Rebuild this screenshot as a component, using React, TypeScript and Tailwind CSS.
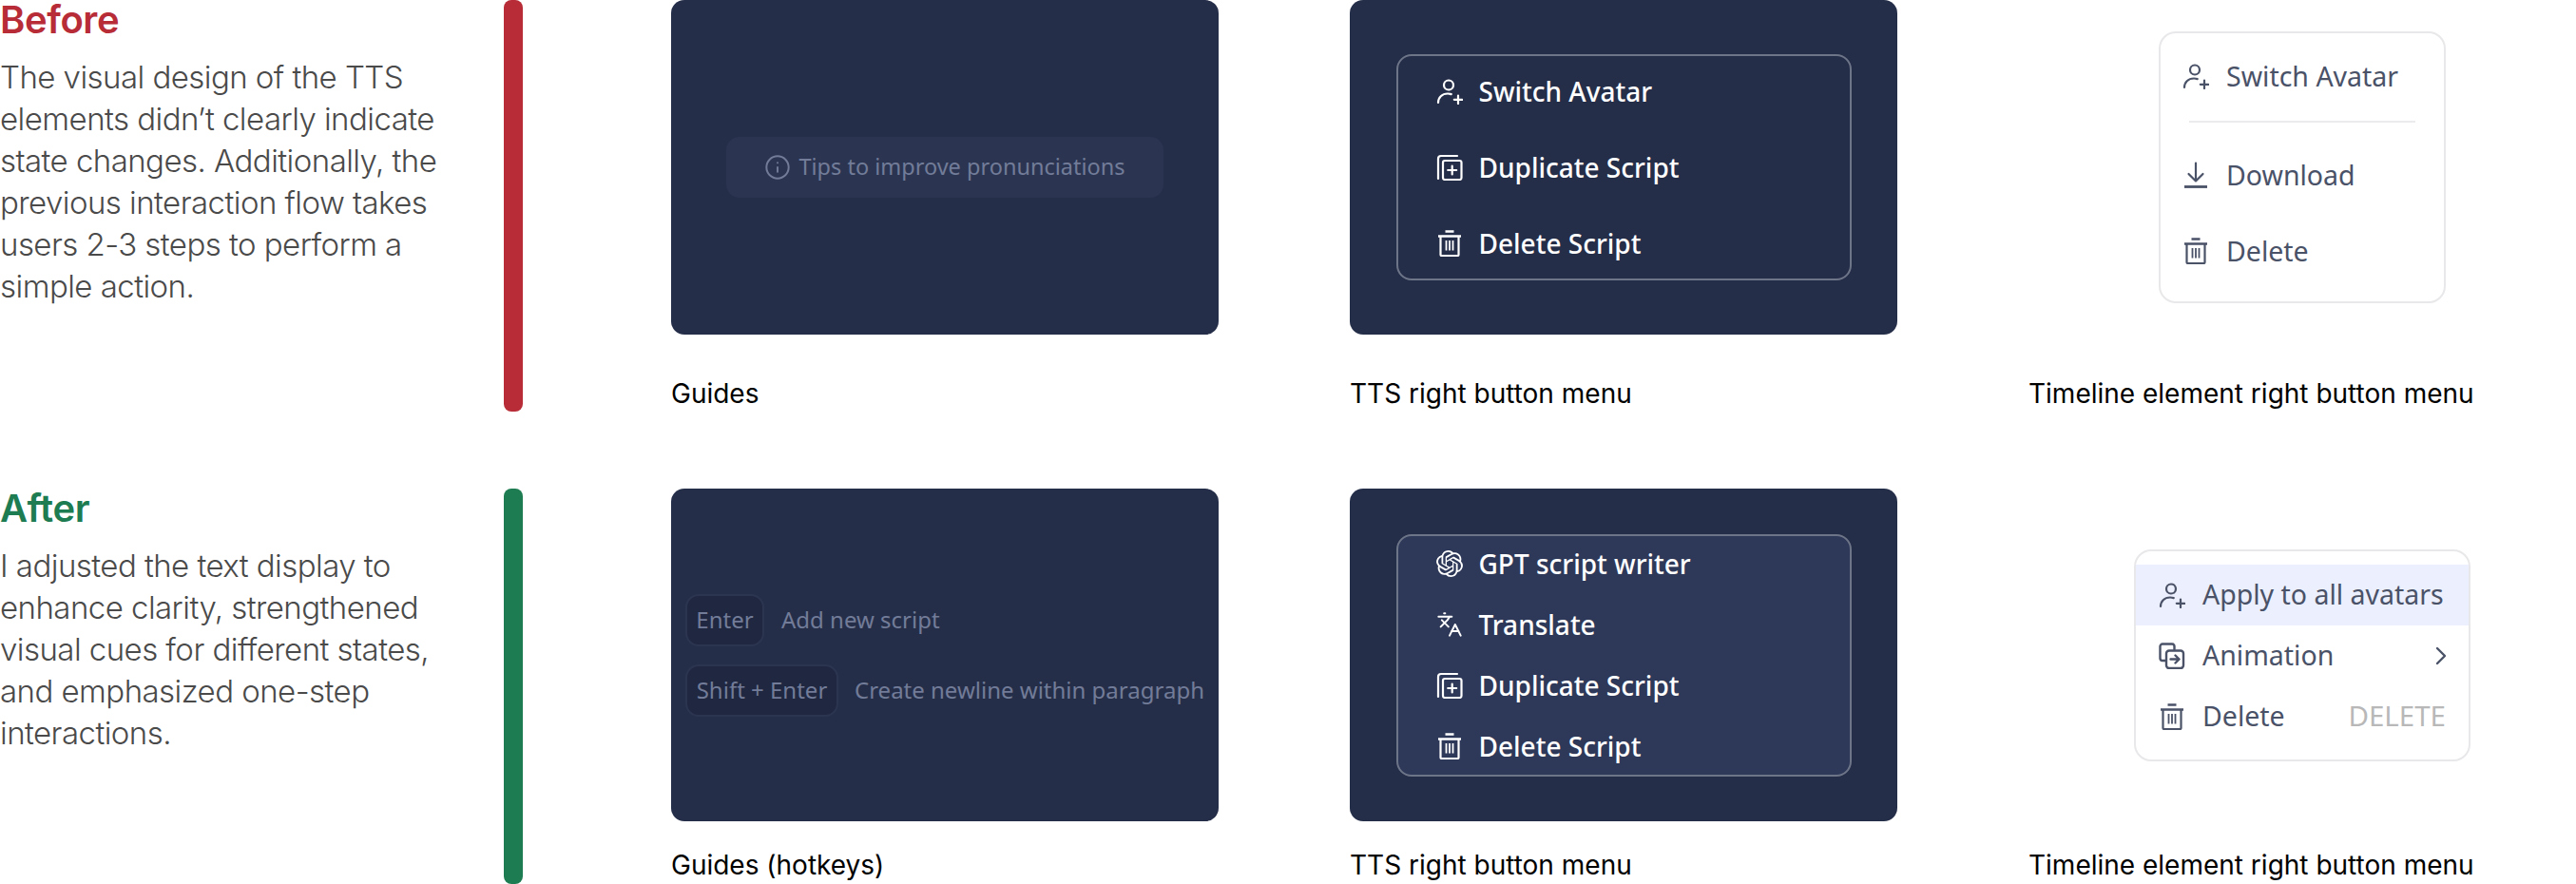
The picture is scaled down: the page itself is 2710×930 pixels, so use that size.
import { ChevronRight, Info, Languages } from "lucide-react";
import { SiOpenai } from "react-icons/si";
import type { ReactNode } from "react";

const bodyFont = "font-['Inter','Liberation_Sans',sans-serif]";
const menuFont = "font-['Noto_Sans','Lato',sans-serif]";

function UserPlusIcon() {
  return (
    <svg viewBox="0 0 28 28" fill="none" stroke="currentColor" strokeWidth="2.200" strokeLinecap="round" className="h-7 w-7">
      <circle cx="13" cy="7.500" r="5" />
      <path d="M2 26c0-5.500 4-9.500 10-9.500 1.400 0 2.600.2 3.700.6" />
      <path d="M23 18.500v8.500M18.800 22.800h8.400" />
    </svg>
  );
}

function DuplicateIcon() {
  return (
    <svg viewBox="0 0 28 28" fill="none" stroke="currentColor" strokeWidth="2.200" strokeLinejoin="round" strokeLinecap="round" className="h-7 w-7">
      <path d="M2 26V5a3 3 0 0 1 3-3h17" />
      <rect x="7" y="7" width="19.500" height="20" rx="2" />
      <path d="M16.700 12.500v9M12.200 17h9" />
    </svg>
  );
}

function TrashIcon() {
  return (
    <svg viewBox="0 0 28 28" fill="none" stroke="currentColor" strokeWidth="2.200" strokeLinejoin="round" className="h-7 w-7">
      <path d="M9.500 1.500h9M2 6.500h24" strokeWidth="2.400" />
      <path d="M4.500 7v19a1 1 0 0 0 1 1h17a1 1 0 0 0 1-1V7" />
      <path d="M10.500 11v10.500M14 11v10.500M17.500 11v10.500" strokeWidth="1.800" />
    </svg>
  );
}

function DownloadIcon() {
  return (
    <svg viewBox="0 0 28 28" fill="none" stroke="currentColor" strokeWidth="2.200" strokeLinecap="round" strokeLinejoin="round" className="h-7 w-7">
      <path d="M14 1.500v19M6.500 13l7.500 7.500 7.500-7.500" />
      <path d="M2 26.500h24" strokeWidth="2.800" strokeLinecap="butt" />
    </svg>
  );
}

function AnimationIcon() {
  return (
    <svg viewBox="0 0 28 28" fill="none" stroke="currentColor" strokeWidth="2.400" strokeLinecap="round" strokeLinejoin="round" className="h-7 w-7">
      <path d="M7 19H4a2.500 2.500 0 0 1-2.500-2.500V4A2.500 2.500 0 0 1 4 1.500h10A2.500 2.500 0 0 1 16.500 4v3" />
      <rect x="8" y="8.500" width="18" height="18.500" rx="3" />
      <path d="M12.500 17.500h8.500M17.500 13.500l4 4-4 4" />
    </svg>
  );
}

function Caption({ children, className }: { children: ReactNode; className: string }) {
  return (
    <div className={`${bodyFont} text-[28px] leading-[32px] font-normal text-black ${className}`}>
      {children}
    </div>
  );
}

function Summary({ title, color, lines }: { title: string; color: string; lines: string[] }) {
  return (
    <div className={`w-[530px] shrink-0 ${bodyFont}`}>
      <div className={`text-[40px] leading-[42px] font-semibold tracking-[-0.4px] ${color}`}>{title}</div>
      <div className="mt-[17px] text-[33px] leading-[44px] font-light tracking-[-0.55px] whitespace-nowrap text-[#4a4a4a]">
        {lines.map((line) => (
          <div key={line}>{line}</div>
        ))}
      </div>
    </div>
  );
}

function DarkRow({ icon, label }: { icon: ReactNode; label: string }) {
  return (
    <div className="flex h-10 items-center gap-[17px] text-white">
      {icon}
      <span className={`${menuFont} text-[28px] font-medium`}>{label}</span>
    </div>
  );
}

function LightRow({ icon, label, right, active }: { icon: ReactNode; label: string; right?: ReactNode; active?: boolean }) {
  return (
    <div className={`flex h-16 items-center gap-[18px] pr-6 pl-6 ${active ? "bg-[#eceffd]" : ""}`}>
      {icon}
      <span className="text-[28.500px] whitespace-nowrap">{label}</span>
      {right && <span className="ml-auto flex items-center">{right}</span>}
    </div>
  );
}

export default function App() {
  return (
    <div className="h-[930px] w-[2710px] overflow-hidden bg-white">
      {/* before */}
      <div className="flex h-[433px]">
        <Summary
          title="Before"
          color="text-[#b72c36]"
          lines={[
            "The visual design of the TTS",
            "elements didn’t clearly indicate",
            "state changes. Additionally, the",
            "previous interaction flow takes",
            "users 2-3 steps to perform a",
            "simple action.",
          ]}
        />
        <div className="h-full w-5 shrink-0 rounded-lg bg-[#b72c36]" />
        <div className="ml-[156px] w-[576px] shrink-0">
          <div className="flex h-[352px] items-center justify-center rounded-[14px] bg-[#252e49]">
            <div className={`flex h-16 w-[460px] items-center justify-center gap-[8px] rounded-[14px] bg-[#2b3552] text-[#727c98] ${menuFont}`}>
              <Info className="h-7 w-7" strokeWidth={1.700} />
              <span className="text-[23.500px]">Tips to improve pronunciations</span>
            </div>
          </div>
          <Caption className="mt-[46px]">Guides</Caption>
        </div>
        <div className="ml-[138px] w-[576px] shrink-0">
          <div className="flex h-[352px] items-center justify-center rounded-[14px] bg-[#252e49]">
            <div className="flex h-[238px] w-[479px] flex-col justify-center gap-10 rounded-2xl border-2 border-[#6d7588] pl-10">
              <DarkRow icon={<UserPlusIcon />} label="Switch Avatar" />
              <DarkRow icon={<DuplicateIcon />} label="Duplicate Script" />
              <DarkRow icon={<TrashIcon />} label="Delete Script" />
            </div>
          </div>
          <Caption className="mt-[46px]">TTS right button menu</Caption>
        </div>
        <div className="ml-[138px] w-[576px] shrink-0">
          <div className="flex h-[352px] items-center justify-center">
            <div className={`h-[286px] w-[302px] rounded-[18px] border-2 border-[#e8e8ea] pt-[25px] pl-[23px] text-[#4a5268] ${menuFont}`}>
              <div className="flex h-10 items-center gap-[18px]">
                <UserPlusIcon />
                <span className="text-[28.500px]">Switch Avatar</span>
              </div>
              <div className="mt-[27px] ml-[7px] h-[2px] w-[238px] bg-[#ebebed]" />
              <div className="mt-[35px] flex h-10 items-center gap-[18px]">
                <DownloadIcon />
                <span className="text-[28.500px]">Download</span>
              </div>
              <div className="mt-10 flex h-10 items-center gap-[18px]">
                <TrashIcon />
                <span className="text-[28.500px]">Delete</span>
              </div>
            </div>
          </div>
          <Caption className="mt-[46px]">Timeline element right button menu</Caption>
        </div>
      </div>

      {/* after */}
      <div className="mt-[81px] flex h-[416px]">
        <Summary
          title="After"
          color="text-[#1e7c52]"
          lines={[
            "I adjusted the text display to",
            "enhance clarity, strengthened",
            "visual cues for different states,",
            "and emphasized one-step",
            "interactions.",
          ]}
        />
        <div className="h-full w-5 shrink-0 rounded-lg bg-[#1e7c52]" />
        <div className="ml-[156px] w-[576px] shrink-0">
          <div className={`flex h-[350px] flex-col justify-center gap-[19px] rounded-[14px] bg-[#252e49] pl-[15px] text-[24px] text-[#727c98] ${menuFont}`}>
            <div className="flex items-center gap-[18px]">
              <span className="flex h-[55px] w-[83px] items-center justify-center rounded-[14px] border-2 border-[#2c3550] bg-[#1f2741]">Enter</span>
              <span>Add new script</span>
            </div>
            <div className="flex items-center gap-[17px]">
              <span className="flex h-[55px] w-[161px] items-center justify-center rounded-[14px] border-2 border-[#2c3550] bg-[#1f2741]">Shift + Enter</span>
              <span className="whitespace-nowrap">Create newline within paragraph</span>
            </div>
          </div>
          <Caption className="mt-[30px]">Guides (hotkeys)</Caption>
        </div>
        <div className="ml-[138px] w-[576px] shrink-0">
          <div className="flex h-[350px] items-center justify-center rounded-[14px] bg-[#252e49]">
            <div className="flex h-[255px] w-[479px] flex-col justify-center gap-6 rounded-2xl border-2 border-[#6d7588] bg-[#2e3959] pl-10">
              <DarkRow icon={<SiOpenai className="h-7 w-7" />} label="GPT script writer" />
              <DarkRow icon={<Languages className="h-7 w-7" strokeWidth={1.700} />} label="Translate" />
              <DarkRow icon={<DuplicateIcon />} label="Duplicate Script" />
              <DarkRow icon={<TrashIcon />} label="Delete Script" />
            </div>
          </div>
          <Caption className="mt-[30px]">TTS right button menu</Caption>
        </div>
        <div className="ml-[138px] w-[576px] shrink-0">
          <div className="flex h-[350px] items-center justify-center">
            <div className={`h-[223px] w-[354px] rounded-[18px] border-2 border-[#e8e8ea] pt-[14px] text-[#4a5268] ${menuFont}`}>
              <LightRow active icon={<UserPlusIcon />} label="Apply to all avatars" />
              <LightRow icon={<AnimationIcon />} label="Animation" right={<ChevronRight className="-mr-[11px] h-8 w-8" strokeWidth={1.800} />} />
              <LightRow
                icon={<TrashIcon />}
                label="Delete"
                right={<span className="text-[29.500px] text-[#b8b8b8]">DELETE</span>}
              />
            </div>
          </div>
          <Caption className="mt-[30px]">Timeline element right button menu</Caption>
        </div>
      </div>
    </div>
  );
}
